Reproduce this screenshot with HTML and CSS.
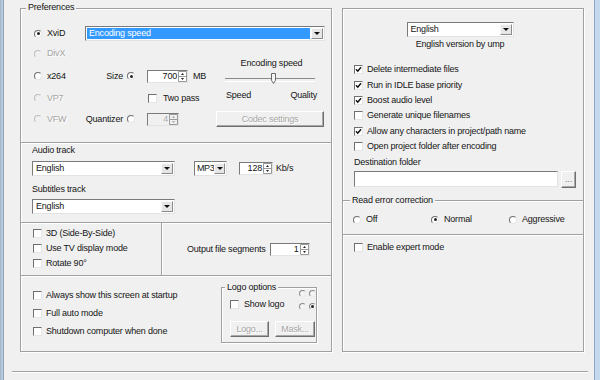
FILE: index.html
```html
<!DOCTYPE html>
<html lang="en">
<head>
    <meta charset="UTF-8">
    <title>Preferences</title>
    <link rel="stylesheet" href="styles.css">
</head>
<body>
<div class="window">
    <div class="frame-left"></div>
    <div class="client">
        <div class="panels">
            <div class="box left-box">
                <div class="legend">Preferences</div>

                <div class="section codec">
                    <div class="codec-grid">
                        <div class="opt row1"><span class="radio on"></span>XviD</div>
                        <div class="combo codec-combo">
                            <span class="combo-text selected">Encoding speed</span>
                            <span class="combo-btn"><i class="arrow"></i></span>
                        </div>

                        <div class="opt off row2"><span class="radio"></span>DivX</div>
                        <div class="speed">
                            <div class="speed-title">Encoding speed</div>
                            <div class="slider">
                                <svg class="thumb" viewBox="0 0 5 11"><path d="M0.5 0.5h4v7l-2 3l-2-3z"/></svg>
                            </div>
                            <div class="speed-ends"><span>Speed</span><span>Quality</span></div>
                        </div>

                        <div class="opt row3"><span class="radio"></span>x264</div>
                        <div class="mode row3">Size <span class="radio on"></span></div>
                        <div class="cell row3">
                            <div class="spin size-spin">
                                <span class="spin-val">700</span>
                                <svg class="spin-arrows" viewBox="0 0 9 11"><path class="frame" d="M0.5 0.5h8v10h-8z M0.5 5.5h8"/><path d="M3 4h3l-1.5-2z M3 7h3l-1.5 2z"/></svg>
                            </div>
                            <span class="unit">MB</span>
                        </div>

                        <div class="opt off row4"><span class="radio"></span>VP7</div>
                        <div class="cell row4 twopass"><span class="check"></span>Two pass</div>

                        <div class="opt off row5"><span class="radio"></span>VFW</div>
                        <div class="mode row5">Quantizer <span class="radio"></span></div>
                        <div class="cell row5">
                            <div class="spin off q-spin">
                                <span class="spin-val">4</span>
                                <svg class="spin-arrows" viewBox="0 0 9 11"><path class="frame" d="M0.5 0.5h8v10h-8z M0.5 5.5h8"/><path d="M3 4h3l-1.5-2z M3 7h3l-1.5 2z"/></svg>
                            </div>
                        </div>
                        <div class="btn off codec-btn">Codec settings</div>
                    </div>
                </div>

                <div class="section audio">
                    <div class="field-label">Audio track</div>
                    <div class="audio-row">
                        <div class="combo track-combo">
                            <span class="combo-text">English</span>
                            <span class="combo-btn"><i class="arrow"></i></span>
                        </div>
                        <div class="combo mp3-combo">
                            <span class="combo-text">MP3</span>
                            <span class="combo-btn"><i class="arrow"></i></span>
                        </div>
                        <div class="spin rate-spin">
                            <span class="spin-val">128</span>
                            <svg class="spin-arrows" viewBox="0 0 9 11"><path class="frame" d="M0.5 0.5h8v10h-8z M0.5 5.5h8"/><path d="M3 4h3l-1.5-2z M3 7h3l-1.5 2z"/></svg>
                        </div>
                        <span class="unit">Kb/s</span>
                    </div>
                    <div class="field-label subs-label">Subtitles track</div>
                    <div class="combo track-combo subs-combo">
                        <span class="combo-text">English</span>
                        <span class="combo-btn"><i class="arrow"></i></span>
                    </div>
                </div>

                <div class="section opts">
                    <div class="opts-left">
                        <div class="check-row"><span class="check"></span>3D (Side-By-Side)</div>
                        <div class="check-row"><span class="check"></span>Use TV display mode</div>
                        <div class="check-row"><span class="check"></span>Rotate 90°</div>
                    </div>
                    <div class="opts-right">
                        <span>Output file segments</span>
                        <div class="spin seg-spin">
                            <span class="spin-val">1</span>
                            <svg class="spin-arrows" viewBox="0 0 9 11"><path class="frame" d="M0.5 0.5h8v10h-8z M0.5 5.5h8"/><path d="M3 4h3l-1.5-2z M3 7h3l-1.5 2z"/></svg>
                        </div>
                    </div>
                </div>

                <div class="section misc">
                    <div class="misc-left">
                        <div class="check-row tall"><span class="check"></span>Always show this screen at startup</div>
                        <div class="check-row tall"><span class="check"></span>Full auto mode</div>
                        <div class="check-row tall"><span class="check"></span>Shutdown computer when done</div>
                    </div>
                    <div class="logo-box">
                        <div class="legend">Logo options</div>
                        <div class="logo-top">
                            <div class="check-row show-logo"><span class="check"></span>Show logo</div>
                            <div class="logo-radios">
                                <span class="radio small"></span>
                                <span class="radio small"></span>
                                <span class="radio small"></span>
                                <span class="radio small on"></span>
                            </div>
                        </div>
                        <div class="logo-buttons">
                            <div class="btn off logo-btn">Logo...</div>
                            <div class="btn off mask-btn">Mask...</div>
                        </div>
                    </div>
                </div>
            </div>

            <div class="box right-box">
                <div class="lang">
                    <div class="combo lang-combo">
                        <span class="combo-text">English</span>
                        <span class="combo-btn"><i class="arrow"></i></span>
                    </div>
                    <div class="lang-note">English version by ump</div>
                </div>
                <div class="checks">
                    <div class="check-row"><span class="check"><svg viewBox="0 0 7 7"><path d="M1 3.2l1.8 2L6 1.3"/></svg></span>Delete intermediate files</div>
                    <div class="check-row"><span class="check"><svg viewBox="0 0 7 7"><path d="M1 3.2l1.8 2L6 1.3"/></svg></span>Run in IDLE base priority</div>
                    <div class="check-row"><span class="check"><svg viewBox="0 0 7 7"><path d="M1 3.2l1.8 2L6 1.3"/></svg></span>Boost audio level</div>
                    <div class="check-row"><span class="check"></span>Generate unique filenames</div>
                    <div class="check-row"><span class="check"><svg viewBox="0 0 7 7"><path d="M1 3.2l1.8 2L6 1.3"/></svg></span>Allow any characters in project/path name</div>
                    <div class="check-row"><span class="check"></span>Open project folder after encoding</div>
                </div>
                <div class="field-label dest-label">Destination folder</div>
                <div class="dest-row">
                    <div class="field"></div>
                    <div class="btn browse">...</div>
                </div>
                <div class="rec-group">
                    <div class="legend">Read error correction</div>
                    <div class="rec-options">
                        <div class="opt"><span class="radio"></span>Off</div>
                        <div class="opt"><span class="radio on"></span>Normal</div>
                        <div class="opt"><span class="radio"></span>Aggressive</div>
                    </div>
                </div>
                <div class="check-row expert"><span class="check"></span>Enable expert mode</div>
            </div>
        </div>
        <div class="sep-bottom"></div>
    </div>
    <div class="frame-right"></div>
</div>
</body>
</html>
```

FILE: styles.css
```css
* {
    box-sizing: border-box;
}
body {
    margin: 0;
    background-color: #f0f0f0;
    font-family: "Liberation Sans", Arial, sans-serif;
    font-size: 9px;
    line-height: 11px;
    letter-spacing: -0.2px;
    color: #151515;
}
.window {
    display: flex;
    width: 600px;
    height: 380px;
    overflow: hidden;
}
.frame-left {
    width: 4px;
    background: linear-gradient(to right, #9fb3c7, #c2d2e2);
    border-right: 1px solid #8fa3b8;
}
.frame-right {
    width: 6px;
    border-left: 1px solid #8ea8c2;
    background-color: #c4d9ee;
}
.client {
    flex: 1;
    padding-top: 8px;
}
.panels {
    display: flex;
    gap: 10px;
    padding-left: 16px;
}

/* etched group boxes */
.box {
    position: relative;
    height: 344px;
    border: 1px solid #a0a0a0;
    box-shadow: inset 1px 1px 0 #fff, 1px 1px 0 #fff;
}
.left-box {
    width: 312px;
    display: flex;
    flex-direction: column;
}
.right-box {
    width: 242px;
    display: flex;
    flex-direction: column;
}
.legend {
    position: absolute;
    top: -7px;
    left: 5px;
    padding: 0 2px;
    background-color: #f0f0f0;
}
.section {
    border-bottom: 1px solid #a0a0a0;
    box-shadow: 0 1px 0 #fff;
}

/* controls */
.opt {
    display: flex;
    align-items: center;
    gap: 5px;
}
.off {
    color: #a6a6a6;
    text-shadow: 1px 1px 0 #fff;
}
.radio {
    display: inline-flex;
    align-items: center;
    justify-content: center;
    flex: none;
    width: 8px;
    height: 8px;
    border-radius: 50%;
    border: 1px solid;
    border-color: #6f6f6f #e6e6e6 #e6e6e6 #6f6f6f;
    background-color: #fff;
}
.radio.on::after {
    content: "";
    width: 3px;
    height: 3px;
    border-radius: 50%;
    background-color: #222;
}
.off .radio {
    border-color: #bdbdbd #f0f0f0 #f0f0f0 #bdbdbd;
    background-color: #f0f0f0;
}
.radio.small {
    width: 7px;
    height: 7px;
    border-color: #8a8a8a #ececec #ececec #8a8a8a;
    background-color: #f4f4f4;
}
.check {
    display: inline-flex;
    align-items: center;
    justify-content: center;
    flex: none;
    width: 9px;
    height: 9px;
    border: 1px solid;
    border-color: #6f6f6f #e6e6e6 #e6e6e6 #6f6f6f;
    background-color: #fff;
}
.check svg {
    width: 7px;
    height: 7px;
    fill: none;
    stroke: #111;
    stroke-width: 1.5;
}
.check-row {
    display: flex;
    align-items: center;
    gap: 4px;
    height: 15px;
    white-space: nowrap;
}
.check-row.tall {
    height: 18px;
}
.combo {
    display: flex;
    height: 15px;
    padding: 1px;
    border: 1px solid;
    border-color: #7a7a7a #e3e3e3 #e3e3e3 #7a7a7a;
    background-color: #fff;
}
.combo-text {
    flex: 1;
    padding-left: 2px;
    white-space: nowrap;
    overflow: hidden;
}
.combo-text.selected {
    margin-right: 1px;
    background-color: #3399ff;
    color: #fff;
}
.combo-btn {
    display: flex;
    align-items: center;
    justify-content: center;
    width: 12px;
    border: 1px solid;
    border-color: #fafafa #8a8a8a #8a8a8a #fafafa;
    background-color: #e6e6e6;
}
.arrow {
    width: 0;
    height: 0;
    border-left: 3px solid transparent;
    border-right: 3px solid transparent;
    border-top: 3px solid #111;
}
.spin {
    display: flex;
    height: 13px;
    border: 1px solid;
    border-color: #7a7a7a #e3e3e3 #e3e3e3 #7a7a7a;
    background-color: #fff;
}
.spin.off {
    background-color: #f0f0f0;
}
.spin-val {
    flex: 1;
    text-align: right;
    padding-right: 1px;
}
.spin-arrows {
    width: 9px;
    height: 11px;
    fill: #222;
}
.spin-arrows .frame {
    fill: none;
    stroke: #9a9a9a;
}
.spin.off .spin-arrows {
    fill: #a6a6a6;
}
.btn {
    display: flex;
    align-items: center;
    justify-content: center;
    height: 16px;
    border: 1px solid;
    border-color: #fff #6e6e6e #6e6e6e #fff;
    box-shadow: inset -1px -1px 0 #a8a8a8;
    background-color: #f0f0f0;
}
.unit {
    margin-left: 5px;
}

/* codec section */
.codec {
    height: 134px;
    padding: 15px 0 0 13px;
}
.codec-grid {
    display: grid;
    grid-template-columns: 51px 62px 69px 109px;
    grid-template-rows: 19px 21px 24px 20px 22px;
    align-items: center;
}
.row1 { grid-row: 1; }
.row2 { grid-row: 2; }
.row3 { grid-row: 3; }
.row4 { grid-row: 4; }
.row5 { grid-row: 5; }
.opt.row1, .opt.row2, .opt.row3, .opt.row4, .opt.row5 {
    grid-column: 1;
}
.codec-combo {
    grid-column: 2 / 5;
    grid-row: 1;
}
.mode {
    grid-column: 2;
    display: flex;
    justify-content: flex-end;
    align-items: center;
    gap: 4px;
    padding-right: 12px;
}
.cell {
    grid-column: 3;
    display: flex;
    align-items: center;
}
.twopass {
    gap: 6px;
    padding-left: 1px;
}
.size-spin {
    width: 41px;
}
.q-spin {
    width: 32px;
}
.codec-btn {
    grid-column: 4;
    grid-row: 5;
    width: 108px;
}
.speed {
    grid-column: 4;
    grid-row: 2 / 5;
    align-self: stretch;
    display: flex;
    flex-direction: column;
    padding-top: 15px;
}
.speed-title {
    text-align: center;
    padding-left: 2px;
}
.slider {
    position: relative;
    height: 12px;
    margin: 4px 10px 0 9px;
}
.slider::before {
    content: "";
    display: block;
    margin-top: 5px;
    height: 2px;
    border-top: 1px solid #8a8a8a;
    border-bottom: 1px solid #fff;
}
.thumb {
    position: absolute;
    top: 0;
    left: 46px;
    width: 5px;
    height: 11px;
    fill: #f4f4f4;
    stroke: #6a6a6a;
    stroke-width: 1;
}
.speed-ends {
    display: flex;
    justify-content: space-between;
    margin-top: 5px;
    padding: 0 8px 0 10px;
}

/* audio section */
.audio {
    height: 80px;
    padding: 2px 0 0 11px;
}
.audio-row {
    display: flex;
    align-items: center;
    margin-top: 5px;
}
.track-combo {
    width: 143px;
}
.mp3-combo {
    width: 33px;
    margin-left: 19px;
}
.mp3-combo .combo-text {
    padding-left: 1px;
    overflow: visible;
    letter-spacing: -0.4px;
}
.mp3-combo .combo-btn {
    width: 11px;
}
.rate-spin {
    width: 34px;
    margin-left: 12px;
}
.audio-row .unit {
    margin-left: 3px;
}
.subs-label {
    margin-top: 8px;
}
.subs-combo {
    margin-top: 4px;
}

/* 3D / segments */
.opts {
    height: 53px;
    display: flex;
}
.opts-left {
    width: 141px;
    padding: 3px 0 0 12px;
    border-right: 1px solid #a0a0a0;
    box-shadow: 1px 0 0 #fff;
}
.opts-right {
    flex: 1;
    display: flex;
    align-items: center;
    gap: 4px;
    padding-left: 25px;
}
.seg-spin {
    width: 40px;
}

/* startup options and logo */
.misc {
    flex: 1;
    display: flex;
    padding: 10px 14px 0 12px;
    border-bottom: none;
    box-shadow: none;
}
.logo-box {
    position: relative;
    margin-left: auto;
    margin-top: 1px;
    width: 96px;
    height: 56px;
    padding-left: 8px;
    border: 1px solid #a0a0a0;
    box-shadow: inset 1px 1px 0 #fff, 1px 1px 0 #fff;
}
.logo-box .legend {
    top: -6px;
    left: 3px;
}
.logo-top {
    display: flex;
    justify-content: space-between;
    height: 23px;
}
.show-logo {
    margin-top: 11px;
    height: 11px;
    gap: 5px;
}
.logo-radios {
    display: grid;
    grid-template-columns: 7px 7px;
    gap: 4px 3px;
    padding-top: 2px;
}
.logo-buttons {
    display: flex;
    gap: 6px;
    margin-top: 10px;
}
.logo-btn {
    width: 39px;
}
.mask-btn {
    width: 40px;
}

/* right column */
.lang {
    display: flex;
    flex-direction: column;
    align-items: center;
    padding: 13px 6px 0 0;
}
.lang-combo {
    width: 107px;
}
.lang-note {
    margin-top: 2px;
}
.checks {
    margin-top: 12px;
    padding-left: 11px;
}
.checks .check-row {
    height: 15.4px;
}
.dest-label {
    margin-top: 3px;
    padding-left: 11px;
}
.dest-row {
    display: flex;
    margin-top: 3px;
    padding-left: 11px;
}
.field {
    width: 204px;
    height: 16px;
    border: 1px solid;
    border-color: #7a7a7a #e3e3e3 #e3e3e3 #7a7a7a;
    background-color: #fff;
}
.browse {
    width: 15px;
    height: 17px;
    margin-left: 3px;
    color: #777;
}
.rec-group {
    position: relative;
    height: 35px;
    margin-top: 12px;
    border-top: 1px solid #a0a0a0;
    border-bottom: 1px solid #a0a0a0;
    box-shadow: inset 0 1px 0 #fff, 0 1px 0 #fff;
}
.rec-group .legend {
    top: -6px;
    left: 7px;
}
.rec-options {
    display: grid;
    grid-template-columns: 78px 78px 78px;
    padding: 13px 0 0 10px;
}
.expert {
    margin-top: 5px;
    padding-left: 11px;
}
.sep-bottom {
    margin: 19px 6px 0 8px;
    border-top: 1px solid #a0a0a0;
    border-bottom: 1px solid #fff;
}
```
